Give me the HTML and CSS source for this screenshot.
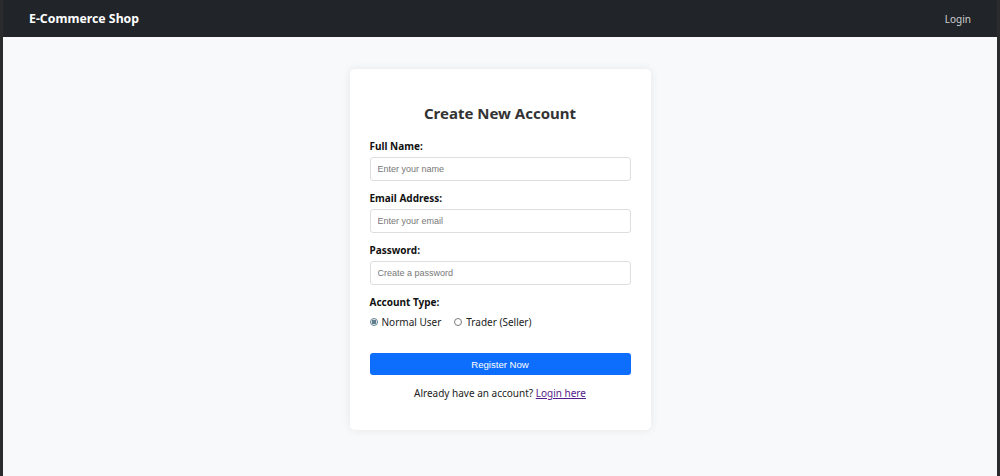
FILE: index.html
```html
<!DOCTYPE html>
<html lang="en">
<head>
<meta charset="utf-8">
<title>Register - E-Commerce Shop</title>
<link rel="stylesheet" href="styles.css">
</head>
<body>
<div class="frame">
  <nav class="navbar">
    <span class="brand">E-Commerce Shop</span>
    <a class="nav-link" href="#">Login</a>
  </nav>
  <main class="main">
    <div class="card">
      <h2 class="title">Create New Account</h2>
      <form class="form">
        <div class="group">
          <label class="label">Full Name:</label>
          <input class="input" type="text" placeholder="Enter your name">
        </div>
        <div class="group">
          <label class="label">Email Address:</label>
          <input class="input" type="email" placeholder="Enter your email">
        </div>
        <div class="group">
          <label class="label">Password:</label>
          <input class="input" type="password" placeholder="Create a password">
        </div>
        <div class="group">
          <label class="label">Account Type:</label>
          <div class="radios">
            <label class="radio"><input type="radio" name="type" class="radio-input" checked> Normal User</label>
            <label class="radio"><input type="radio" name="type" class="radio-input"> Trader (Seller)</label>
          </div>
        </div>
        <button type="button" class="btn">Register Now</button>
      </form>
      <p class="footer-text">Already have an account? <a href="#" class="link">Login here</a></p>
    </div>
  </main>
</div>
</body>
</html>
```
FILE: styles.css
```css
* { box-sizing: border-box; }
html, body { margin: 0; padding: 0; }
body {
  font-family: "Noto Sans", "Open Sans", sans-serif;
  background: #2a2b2d;
}
.frame {
  height: 476px;
  margin: 0 3px;
  background: #f8f9fa;
  display: flex;
  flex-direction: column;
}
.navbar {
  height: 37px;
  background: #212529;
  display: flex;
  align-items: center;
  justify-content: space-between;
  padding: 0 26px 0 26px;
}
.brand {
  color: #fff;
  font-weight: 700;
  font-size: 12.3px;
}
.nav-link {
  color: rgba(255,255,255,0.78);
  text-decoration: none;
  font-size: 10px;
}
.main {
  flex: 1;
  display: flex;
  justify-content: center;
  align-items: flex-start;
  padding-top: 32px;
}
.card {
  width: 301px;
  background: #fff;
  border-radius: 5px;
  box-shadow: 0 0 10px rgba(0,0,0,0.08);
  padding: 20px 20px 20px;
}
.title {
  margin: 13px 0 14px;
  text-align: center;
  color: #333;
  font-size: 15px;
  line-height: 23px;
  font-weight: 700;
}
.group { margin-bottom: 10px; }
.label {
  display: block;
  font-weight: 700;
  font-size: 10px;
  line-height: 15px;
  margin-bottom: 3px;
  color: #111;
}
.input {
  display: block;
  width: 100%;
  height: 24px;
  border: 1px solid #dedede;
  border-radius: 3px;
  padding: 0 7px;
  font-family: "Liberation Sans", Arial, sans-serif;
  font-size: 9px;
  color: #333;
  background: #fff;
}
.input::placeholder { color: #777; }
.radios {
  display: flex;
  gap: 13px;
  height: 17px;
  align-items: center;
}
.radio {
  display: flex;
  align-items: center;
  gap: 4px;
  font-size: 10px;
  color: #222;
}
.radio-input {
  appearance: none;
  -webkit-appearance: none;
  margin: 0;
  width: 8px;
  height: 8px;
  border: 1px solid #7a7a7a;
  border-radius: 50%;
  background: #fff;
}
.radio-input:checked {
  border-color: #5f7f8e;
  background: radial-gradient(circle, #5f7f8e 0 2.2px, #fff 2.6px);
}
.btn {
  display: block;
  width: 100%;
  height: 22px;
  margin-top: 23px;
  border: none;
  border-radius: 3px;
  background: #0d6efd;
  color: #fff;
  font-family: "Liberation Sans", Arial, sans-serif;
  font-size: 9.6px;
}
.footer-text {
  margin: 10px 0 9px;
  text-align: center;
  font-size: 10px;
  line-height: 16px;
  color: #222;
}
.link { color: #551a8b; }
```
